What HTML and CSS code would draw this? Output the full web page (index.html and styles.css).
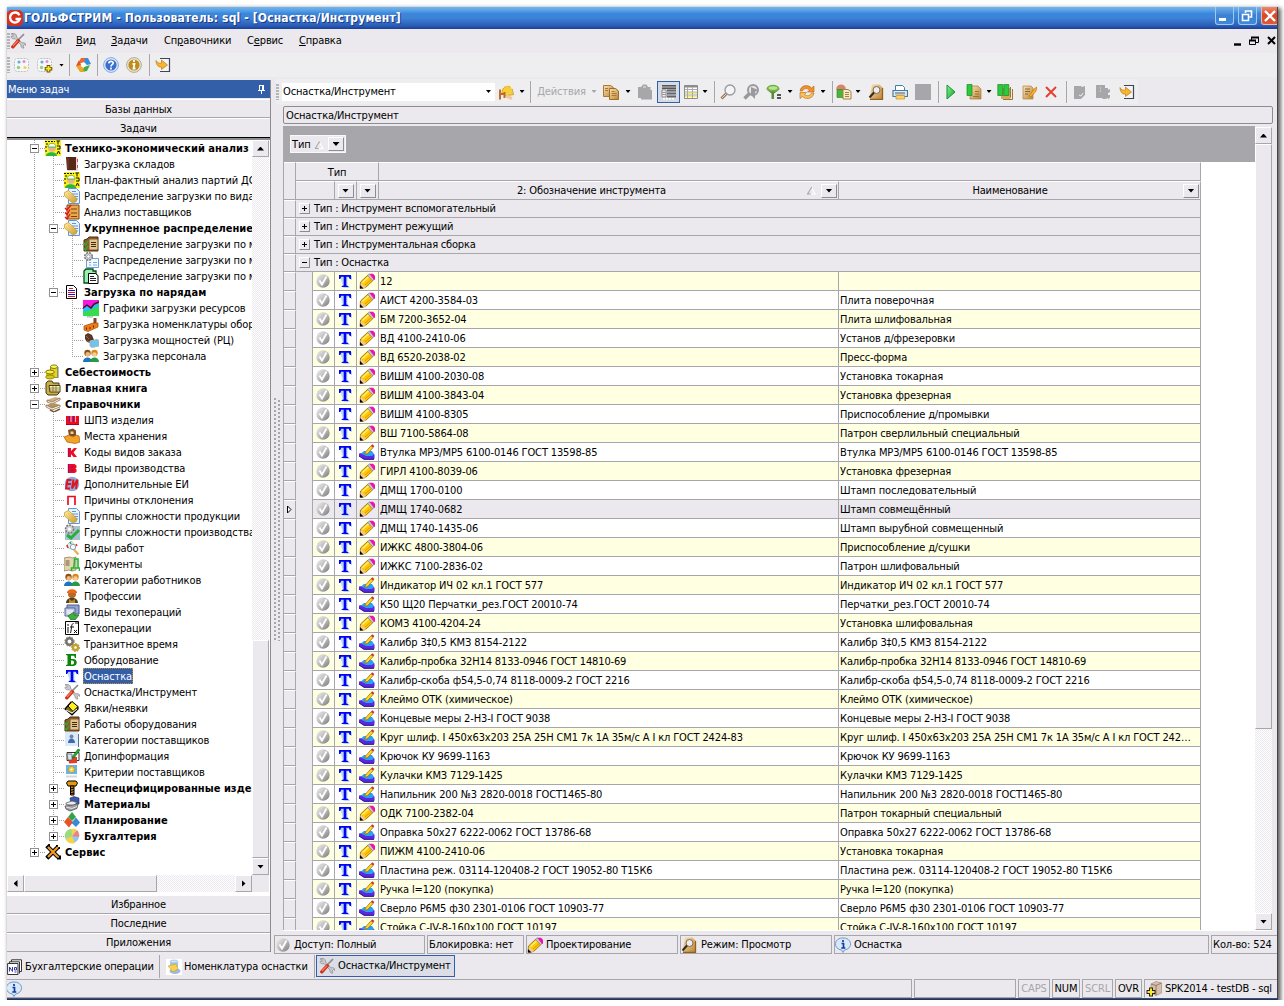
FILE: index.html
```html
<!DOCTYPE html>
<html lang="ru">
<head>
<meta charset="utf-8">
<title>ГОЛЬФСТРИМ</title>
<link rel="stylesheet" href="styles.css">
</head>
<body>
<svg class="sprite" aria-hidden="true">
  <defs>
    <linearGradient id="g-ball" x2="1" y2="1"><stop offset="0" stop-color="#f0f0f0"/><stop offset=".5" stop-color="#bcbcbc"/><stop offset="1" stop-color="#777"/></linearGradient>
    <linearGradient id="g-gold" x2="1" y2="1"><stop offset="0" stop-color="#fdeb9a"/><stop offset="1" stop-color="#cf9a2c"/></linearGradient>
    <linearGradient id="g-tan" x2="1" y2="1"><stop offset="0" stop-color="#fbe3b4"/><stop offset="1" stop-color="#b98433"/></linearGradient>
    <linearGradient id="g-green" x2="1" y2="1"><stop offset="0" stop-color="#8af090"/><stop offset="1" stop-color="#0fa52c"/></linearGradient>
  </defs>
  <symbol id="app" viewBox="0 0 16 16"><path d="M3 0h10l3 3v10l-3 3H3l-3-3V3z" fill="#d8301c"/><path d="M12.500 5.200A5 5 0 1 0 12.800 9H8.500" fill="none" stroke="#fff" stroke-width="2.400"/></symbol>
  <symbol id="ball" viewBox="0 0 16 16"><circle cx="8" cy="8" r="6.700" fill="url(#g-ball)"/><path d="M4.500 7.500l2.500 4 4.500-8" fill="none" stroke="#fff" stroke-width="1.800"/></symbol>
  <symbol id="t" viewBox="0 0 16 16"><path d="M3 3h12v4h-1l-1-2.300h-2.500v8.800h2V15H6.500" fill="#b9d8f4"/><path d="M2 2h12v4h-1.300l-.9-2.300H9.300v8.700l2 .6V14H4.700v-1l2-.6V3.700H4.200L3.300 6H2z" fill="#0404f4"/></symbol>
  <symbol id="pencil" viewBox="0 0 16 16"><path d="M1.500 9L9 2l5 5.500-7.500 7-5.500 1z" fill="#ffc808" stroke="#8a6200" stroke-width=".8"/><path d="M2 9.500l5 5-6 1z" fill="#f0c8a0"/><path d="M1 12l3.500 3.500H1z" fill="#000"/><path d="M8.500 2.500L10.500.8l5 5-2 2z" fill="#c4c4c8" stroke="#77777c" stroke-width=".6"/><path d="M10.500.7h3.500l2 2v3.800l-1 .5z" fill="#f010b0"/><path d="M3.500 9.500L9.500 4" stroke="#fff27a" stroke-width="1.300"/><path d="M6 12l6.500-5.500" stroke="#e09800"/></symbol>
  <symbol id="edit" viewBox="0 0 16 16"><path d="M0 9.500l3-.5h9l3.500 1.500v4L14.500 15.500H5L0 12z" fill="#5a28e0"/><path d="M2 9.500l3-2.500h8l2 3-2 2H7z" fill="#28a0f8"/><path d="M0 12L5 15.300h10" fill="none" stroke="#28128a"/><path d="M6.500 8L12 1.800l2.200 1.700L8.700 9.500l-3.200.7z" fill="#ffd528" stroke="#a06000" stroke-width=".7"/><path d="M12 1.800L13.200.3l2.200 1.700L14.200 3.500z" fill="#c83030"/></symbol>
  <symbol id="tools" viewBox="0 0 16 16"><path d="M1 1l2 .3v2L1.300 3C.5 5 3 6.500 5 5.500l6 6.500c-.3 2 1 3.500 3 3l-1-2 1.500-1.500 1.300 1C16 10 14 9 12 10L6.500 4C7 1 3.500-.5 1 1z" fill="#cacace" stroke="#88888d" stroke-width=".7"/><path d="M8.500 6.500L14 1.200" stroke="#8c8c90" stroke-width="1.600"/><path d="M2.800 13.800L8.300 7.700" stroke="#d03018" stroke-width="3.400" stroke-linecap="round"/><path d="M3 13L8 7.600" stroke="#fa7a60" stroke-width="1.300"/></symbol>
  <symbol id="wave" viewBox="0 0 16 16"><rect x=".5" y="1.500" width="14" height="13" rx="3" fill="#f7f7f7" stroke="#b9c3bd" stroke-dasharray="2 1"/><circle cx="5" cy="5" r="1.600" fill="#6fa8dc"/><circle cx="10" cy="4.500" r="1.500" fill="#e08adf"/><circle cx="4.500" cy="10.500" r="1.700" fill="#8ed28a"/><circle cx="11" cy="10.500" r="1.600" fill="#f0cf60"/></symbol>
  <symbol id="waveadd" viewBox="0 0 16 16"><use href="#wave"/><path d="M11.500 8v7.500M7.700 11.700h7.600" stroke="#6a5200" stroke-width="3.600"/><path d="M11.500 9v5.500M8.700 11.700h5.600" stroke="#ffe928" stroke-width="1.800"/></symbol>
  <symbol id="cycle" viewBox="0 0 16 16"><path d="M3 7L6 1h5L9 5z" fill="#f0662c"/><path d="M10 1h3l3 6-4 1-3-3z" fill="#3b8fd8"/><path d="M15 8l-3 6-5 1 2-5z" fill="#3fae45"/><path d="M9 15H5L1 9l4-2 3 4z" fill="#f0a524"/><path d="M1 9l3-6 2 5z" fill="#e2502c"/><circle cx="8.300" cy="8" r="2.300" fill="#fff"/></symbol>
  <symbol id="help" viewBox="0 0 16 16"><circle cx="8" cy="8" r="7.400" fill="#dce9fa" stroke="#86a8e0"/><circle cx="8" cy="8" r="5.600" fill="#3a6fd0"/><path d="M5.800 6.400C6 3.500 10.400 3.800 10.200 6.200 10 7.800 8 7.600 8 9.500M8 10.500v2" fill="none" stroke="#fff" stroke-width="1.700"/></symbol>
  <symbol id="about" viewBox="0 0 16 16"><circle cx="8" cy="8" r="7.400" fill="#e8e4d6" stroke="#b4ac90"/><circle cx="8" cy="8" r="5.600" fill="#bd8d1c"/><path d="M8 3v2M6.500 7H8.500l-1 4.500h2" fill="none" stroke="#fff" stroke-width="1.800"/></symbol>
  <symbol id="exit" viewBox="0 0 16 16"><path d="M5 1.500h9.500v13H5" fill="#f5f5f8" stroke="#3c4658" stroke-width="1.200"/><path d="M1 3.500c1 2.500 3 3 5.500 2.500V3l6 5-6 4.500V10C3 10.500 1 7.500 1 3.500z" fill="#f7b52e" stroke="#b97b14" stroke-width=".7"/></symbol>
  <symbol id="helmet" viewBox="0 0 16 16"><path d="M4 9c0-9 11-9 11 0l1 1.500L7 12z" fill="#f6ce3c" stroke="#c09018" stroke-width=".7"/><path d="M8 2l4-1 2 4" fill="none" stroke="#ffef95"/><path d="M2 5.500v10M6.500 8v6M2 10h5" stroke="#c06c28" stroke-width="2"/><path d="M8 12l6 2.500" stroke="#f0c9a0" stroke-width="3"/></symbol>
  <symbol id="copy" viewBox="0 0 16 16"><path d="M.5 1.500h7l3 2v9H.5z" fill="url(#g-tan)" stroke="#b1762a"/><path d="M6.500 4.500h6l3 2.500v8.500h-9z" fill="url(#g-tan)" stroke="#a46a20"/><path d="M8.500 7.500h3M8.500 9.500h5M8.500 11.500h5M2 4.500h3M2 6.500h3" stroke="#a5793b"/></symbol>
  <symbol id="paste" viewBox="0 0 16 16"><path d="M1 3h3l2-2.500h3.500L11 3h2.500v3H15v9.500H4V14H1z" fill="#a7a6aa"/><path d="M6 3h3" stroke="#e6e6ea"/></symbol>
  <symbol id="grpview" viewBox="0 0 16 16"><path d="M1 1h14v4H1z" fill="#55555a"/><path d="M1 3h14" stroke="#c8c8cc"/><path d="M1 6h4v7H1z" fill="#f4f4f6" stroke="#77777c" stroke-width=".8"/><path d="M1.500 8.500h3M1.500 10.500h3" stroke="#77777c" stroke-width=".8"/><path d="M6 6.500h9M6 9.500h9M6 12.500h9" stroke="#66666b" stroke-width="2"/><path d="M2 14.800h12" stroke="#fff" stroke-width="1.600" stroke-dasharray="2 1"/></symbol>
  <symbol id="table" viewBox="0 0 16 16"><path d="M1.500 1.500h13v13h-13z" fill="#fff" stroke="#8c8c91"/><path d="M1.500 2.500h13" stroke="#8c8c91" stroke-width="2"/><path d="M2 9.500h12M2 12.500h12" stroke="#f4ed59" stroke-width="1.500"/><path d="M4.500 3v11M9.500 3v11M2 5.500h12M2 8h12M2 11h12" stroke="#aaa"/></symbol>
  <symbol id="find" viewBox="0 0 16 16"><path d="M6.500 9.500L1.500 14.500" stroke="#9b7557" stroke-width="3"/><path d="M6 10l-4 4" stroke="#f4d8bd"/><circle cx="10" cy="6" r="5" fill="#f3f3f8" stroke="#98989d" stroke-width="1.300"/></symbol>
  <symbol id="findnext" viewBox="0 0 16 16"><path d="M6.500 9.500L1.500 14.500" stroke="#99989d" stroke-width="3.500"/><circle cx="10" cy="6" r="5" fill="#e7e6ea" stroke="#9a999e" stroke-width="2"/><path d="M8 3l7 3-3 2v7L8 11z" fill="#9a999e"/></symbol>
  <symbol id="filter" viewBox="0 0 16 16"><ellipse cx="7" cy="4.500" rx="6.500" ry="3.700" fill="#73b146"/><ellipse cx="7" cy="4" rx="4.500" ry="1.800" fill="#bce394"/><path d="M1 6l4.500 3.500V15H8V9.500L13 6c-3 2-9 2-12 0z" fill="#5a8c37"/><path d="M11 11h4M11 14h4" stroke="#222" stroke-width="1.700"/></symbol>
  <symbol id="refresh" viewBox="0 0 16 16"><path d="M1 7C2 1 9 0 12.500 4L15 2v6H8.500l2-2C8 4 5 4 3.500 7z" fill="#f1902a" stroke="#b76415" stroke-width=".6"/><path d="M15 9c-1 6-8 7-11.500 3.500L1 14.500V8.500h6.500l-2 2C8 12.500 11 12 12.500 9z" fill="#f9c05a" stroke="#b76415" stroke-width=".6"/></symbol>
  <symbol id="report" viewBox="0 0 16 16"><ellipse cx="5" cy="4.500" rx="4.700" ry="4" fill="#d8846a"/><path d="M1 5.500h7v8H1z" fill="#48b538" stroke="#2d7d22" stroke-width=".6"/><path d="M7 5.500h5l3 2v7.500H7z" fill="#fbecc9" stroke="#a67f43"/><path d="M9 8.500h4M9 10.500h4M9 12.500h4" stroke="#a67f43"/></symbol>
  <symbol id="preview" viewBox="0 0 16 16"><path d="M4 .5h7.500l3 3v12H2v-4z" fill="url(#g-tan)"/><path d="M14.500 4v11.500H2" fill="none" stroke="#94601c" stroke-width="1.300"/><circle cx="8.500" cy="6" r="3.500" fill="#e8ecf3" stroke="#866a44"/><path d="M6 8.500L1.500 13.500" stroke="#332b22" stroke-width="2"/></symbol>
  <symbol id="print" viewBox="0 0 16 16"><path d="M3.500 7V1.500h7l2 2V7" fill="#fff" stroke="#3e7daa"/><path d="M1 6.500h14.500v6H1z" fill="#e6e9ed" stroke="#3e7daa" stroke-width="1.200"/><path d="M3 8h10v2.500H3z" fill="#98a2ab"/><path d="M4 11.500h8.500V15H4z" fill="#ffcf61" stroke="#c68d25" stroke-width=".7"/></symbol>
  <symbol id="stop" viewBox="0 0 16 16"><path d="M0 0h16v16H0z" fill="#a7a6aa"/></symbol>
  <symbol id="play" viewBox="0 0 16 16"><path d="M4 1l8 7-8 7z" fill="url(#g-green)" stroke="#109431"/></symbol>
  <symbol id="doc1" viewBox="0 0 16 16"><path d="M4 2h8l3 3v10H4z" fill="url(#g-tan)" stroke="#a67d3e" stroke-width=".7"/><path d="M7 12.500h6M9 7.500h4M9 10h4" stroke="#967444"/><path d="M1 .5h5v11H1z" fill="#2cc93c" stroke="#168a24" stroke-width=".7"/></symbol>
  <symbol id="doc2" viewBox="0 0 16 16"><path d="M4 4h9.500v11H4z" fill="#d5a85c"/><path d="M15.500 5v10.500H6" fill="none" stroke="#9d7430"/><path d="M13.500 3v10.500" stroke="#9d7430"/><path d="M.8.500h5v11h-5zM6.800.500h5v11h-5z" fill="#2cc93c" stroke="#168a24" stroke-width=".7"/></symbol>
  <symbol id="docedit" viewBox="0 0 16 16"><path d="M2 2h8l2 2v11H2z" fill="url(#g-tan)" stroke="#b0833e" stroke-width=".7"/><path d="M4 5h5M4 7.500h5M4 10h3" stroke="#80633b"/><path d="M8 12l5-7 3-2-1 4-5 6z" fill="#f9ae2d" stroke="#b36c14" stroke-width=".6"/></symbol>
  <symbol id="del" viewBox="0 0 16 16"><path d="M3 3l10 10M13 3L3 13" stroke="#e83c30" stroke-width="1.900"/></symbol>
  <symbol id="gr1" viewBox="0 0 16 16"><path d="M2 2h7l1 1 3-1v9l-4 4H2z" fill="#a7a6aa"/><path d="M7 11l2 1 2-3" fill="none" stroke="#f0f0f2"/></symbol>
  <symbol id="gr2" viewBox="0 0 16 16"><path d="M1 1h9v3h3v2l2-1v3l-2 1v2h2v2l-1 2-2-1-1 1H8l-1-1H1z" fill="#a7a6aa"/><path d="M5 4h1M5 7h1" stroke="#eee"/></symbol>
  <symbol id="info" viewBox="0 0 16 16"><path d="M8 1a6.800 6 0 0 1 1.500 12L8 15.500 6.500 13A6.800 6 0 0 1 8 1z" fill="#d9e9f9" stroke="#6d9ccc"/><path d="M8 3v2M6.500 6.500H8.500V11M6.300 11h4" fill="none" stroke="#143a9c" stroke-width="1.700"/></symbol>
  <symbol id="numdoc" viewBox="0 0 16 16"><path d="M4.500 3V.8H14.500V12.500h-2M2.500 5V2.800H12.500V14.500" fill="#fff" stroke="#333"/><path d="M.6 4.500h10.400v11H.6z" fill="#fff" stroke="#333"/><path d="M2.500 12.500V8l3 4.500V8M9.500 8.500H7.500v2.500h2zM7.500 13h2" fill="none" stroke="#3838a8"/></symbol>
  <symbol id="nomen" viewBox="0 0 16 16"><path d="M0 0h16v16H0z" fill="#fff"/><path d="M4 2.500h8v6H4z" fill="#9fc6ea"/><ellipse cx="8" cy="2.500" rx="4" ry="1.500" fill="#d3e6f7" stroke="#7da3c9" stroke-width=".5"/><ellipse cx="9" cy="12" rx="5.500" ry="3" fill="#9fb9dc"/><path d="M2 7l8-2 2 5-5 3z" fill="#fad04d" stroke="#c89a23" stroke-width=".5"/></symbol>
  <symbol id="db" viewBox="0 0 16 16"><path d="M5 3l5-2.500L15.500 2v10L10 14.500 5 12z" fill="#d7bfae" stroke="#9b8376" stroke-width=".6"/><path d="M10 4.500v10M5 3l5 1.500L15.500 2" fill="none" stroke="#95796a"/><path d="M5 6.500v9M.5 11h9" stroke="#222" stroke-width="4"/><path d="M5 7.500v7M1.500 11h7" stroke="#ffea22" stroke-width="2"/></symbol>

  <symbol id="tea" viewBox="0 0 16 16"><path d="M0 0h16v16H0z" fill="#fff01a"/><path d="M0 1.500h10M1 4h3M0 7h2M0 11h3" stroke="#111" stroke-dasharray="2 1"/><path d="M11.500 1h3.500M13 1v3.500M12 6h3v3h-3M12 14l1.500-3 1.500 3" fill="none" stroke="#111"/><circle cx="7" cy="8" r="3.800" fill="#e5b48b"/><path d="M3 7c0-5 8-5 8 0z" fill="#f3fff3" stroke="#29a339" stroke-width=".7"/><path d="M1 16c0-5 11-5 11 0z" fill="#27b83d"/></symbol>
  <symbol id="book" viewBox="0 0 16 16"><path d="M3 1h9l2 1v13H4l-1-1z" fill="#e6d7cd"/><path d="M2 1h10v13H3z" fill="#572616"/><path d="M4 2v11" stroke="#7e4631"/><path d="M13.500 3v3M13.500 9v3" stroke="#e33c6b"/></symbol>
  <symbol id="gold" viewBox="0 0 16 16"><path d="M4.500.5h8l3 3v12h-11z" fill="#e9f2fd" stroke="#5e93d6"/><path d="M8 3.500h4M8 6h6M10 8.500h4M11 11h3" stroke="#5e93d6"/><path d="M.5 4.500l4-2 8 7.500v3.500l-4 1.500L.5 8z" fill="url(#g-gold)" stroke="#c79733" stroke-width=".7"/></symbol>
  <symbol id="check" viewBox="0 0 16 16"><path d="M3 1h12v14H3z" fill="#eba94d" stroke="#7b4513"/><path d="M7 5h6M7 9h6M7 12.500h6" stroke="#774015"/><path d="M1 4l2 2 4-5M1 8.500l2 2 3-5M1 13l2 2 3-5" fill="none" stroke="#dd1717" stroke-width="1.400"/></symbol>
  <symbol id="folderlist" viewBox="0 0 16 16"><path d="M1 4l3-1 2-2h9v14H1z" fill="#8a5c2c" stroke="#4b3013"/><path d="M6.500 3.500h8v10h-8z" fill="#e3c48f"/><path d="M8 6.500h5M8 8.500h5M8 10.500h5" stroke="#3d2811"/><path d="M1 7l1.500 2L5 5M1 12l1.500 2L5 10" fill="none" stroke="#2dad2d" stroke-width="1.300"/></symbol>
  <symbol id="gearlist" viewBox="0 0 16 16"><path d="M3.500 6.500h12v9h-12z" fill="#f5f9ff" stroke="#6ea0dd"/><path d="M6 10.500h2M10 10.500h4M6 13h2M10 13h4" stroke="#78a8e0"/><circle cx="5.500" cy="4.500" r="3.800" fill="#d0d0d0" stroke="#777" stroke-width="1.400" stroke-dasharray="2 1"/><circle cx="5.500" cy="4.500" r="1.600" fill="#fff" stroke="#888" stroke-width=".6"/></symbol>
  <symbol id="greendoc" viewBox="0 0 16 16"><path d="M1 15V3l2-2h7v2h3v12z" fill="#9bf0b0" stroke="#064a1a" stroke-width="1.300"/><path d="M5.500 5.500h7l2.500 2V15.500H5.500z" fill="#fff" stroke="#000"/><path d="M7 8.500h4M7 10.500h6M7 12.500h6" stroke="#222"/></symbol>
  <symbol id="order" viewBox="0 0 16 16"><path d="M2.500 1.500h7l3 3v10h-10z" fill="#fff" stroke="#000"/><path d="M5 4.500h4M4 8.500h7M4 12.500h7" stroke="#e21a1a"/><path d="M4 6.500h7M4 10.500h7" stroke="#1515dd"/></symbol>
  <symbol id="graph" viewBox="0 0 16 16"><path d="M0 0h16v16H0z" fill="#f815e0"/><path d="M0 9l4-3 4 3 3-4 5-2v13H0z" fill="#25bff0"/><path d="M0 12l5-1 4-2 7-3v10H0z" fill="#35dc4d"/><path d="M0 8l4-3 4 3 3-4 5-2" fill="none" stroke="#341a1a" stroke-width="1.400"/></symbol>
  <symbol id="factory" viewBox="0 0 16 16"><path d="M4 1c2-1 4 1 6-.5" fill="none" stroke="#999"/><path d="M10.500 2h3v8h-3z" fill="#704a32"/><path d="M1 10l9-3h5v4L5 15.500 1 14z" fill="#f17a13" stroke="#9b4b05" stroke-width=".7"/><path d="M3 12.500h1M6.500 12h1M10 10.500h1" stroke="#5b2700" stroke-width="2"/></symbol>
  <symbol id="monitor" viewBox="0 0 16 16"><path d="M2 3l3-2 4 2 2 5-3 3-4-1-2-3z" fill="#5b3624"/><path d="M3 4l3 3M4 9l4 2" stroke="#9a6a4c"/><path d="M7 9l7-1.500 2 1v5.500l-7 1.500-2-1.500z" fill="#6ec4ea" stroke="#a9b6bd"/></symbol>
  <symbol id="people" viewBox="0 0 16 16"><circle cx="4.500" cy="5" r="3.200" fill="#8f5018"/><circle cx="4.800" cy="6.300" r="2.300" fill="#f1b575"/><path d="M0 14c0-6 9-6 9 0z" fill="#1d74bf"/><circle cx="11.500" cy="5" r="3.200" fill="#d58a19"/><circle cx="11.500" cy="6.500" r="2.200" fill="#f7cf96"/><path d="M7 14c0-6 9-6 9 0z" fill="#279748"/></symbol>
  <symbol id="coins" viewBox="0 0 16 16"><path d="M5.500 2.500h7v11h-7z" fill="#e8d614" stroke="#6a6010" stroke-width=".7"/><ellipse cx="9" cy="2.700" rx="3.500" ry="1.800" fill="#fdf85f" stroke="#867b0d"/><path d="M1 8h8.500v5.500H1z" fill="#d9c612"/><ellipse cx="5" cy="8" rx="4.300" ry="2" fill="#fbf04a" stroke="#7c7209"/><ellipse cx="5" cy="13" rx="4.300" ry="2" fill="#d9c612" stroke="#7c7209" stroke-width=".7"/><path d="M12.800 3v11" stroke="#8a8a8a" stroke-width="1.600"/></symbol>
  <symbol id="ledger" viewBox="0 0 16 16"><path d="M1 13V3l2-2h4l1 2h6v10l-2 2H3z" fill="#c9ae45" stroke="#453b0d"/><path d="M4 5.500h11V12H5z" fill="#fff6c5" stroke="#453b0d"/><path d="M5 8h9M5 10h9M8 6v6M11 6v6" stroke="#6f621e" stroke-width=".7"/></symbol>
  <symbol id="books" viewBox="0 0 16 16"><path d="M2 4l8-3 5 1-8 4z" fill="#d0b086"/><path d="M2 4v2l5 2 8-4V2L7 6z" fill="#f5eee2" stroke="#775a38" stroke-width=".7"/><path d="M1 9l8-2 6 2-8 3z" fill="#b8925e"/><path d="M1 9v2l6 3 8-3V9l-8 3z" fill="#fbf6ec" stroke="#775a38" stroke-width=".7"/><path d="M5 14l4 2 6-3" fill="none" stroke="#775a38" stroke-width="1.400"/></symbol>
  <symbol id="bars" viewBox="0 0 16 16"><path d="M2 4h13v9H2z" fill="#f00a20"/><path d="M5.500 4v6M9.500 4v6" stroke="#5c1db0"/><path d="M7 4v6M11.500 4v6" stroke="#fbb"/><path d="M2 12.500h13" stroke="#a8002c"/></symbol>
  <symbol id="store" viewBox="0 0 16 16"><path d="M4 2l5-1.500 3 2V9L5 8z" fill="#7e4d20"/><path d="M6.500 3.500h3V6h-3z" fill="#e9d1a5"/><path d="M0 9l5-2 4 2 3-2 3 1 1 6-5 1.500L3 14z" fill="#f4a125" stroke="#a65d0a" stroke-width=".7"/></symbol>
  <symbol id="k" viewBox="0 0 16 16"><path d="M4 4h3v3l3-3h3L9.500 8.500 13 13H9.500L7 10v3H4z" fill="#f00a20"/><path d="M4.300 4v9" stroke="#6414a0" stroke-width=".8"/></symbol>
  <symbol id="v" viewBox="0 0 16 16"><path d="M4 4h6.500l2 1.500v2l-1 1 1 1V12l-2 1H4z" fill="#f00a20"/><path d="M7 7h2.500M7 10.500h2.500M4.300 4v9" stroke="#6414a0" stroke-width=".9"/></symbol>
  <symbol id="ei" viewBox="0 0 16 16"><circle cx="8" cy="8" r="7.300" fill="#86afe0"/><path d="M7.500 4H3.500L2 12.500h4M3 8h4M9.500 3.500L8 12.500l5.500-9L12 13" fill="none" stroke="#e31420" stroke-width="2"/></symbol>
  <symbol id="p" viewBox="0 0 16 16"><path d="M4 13V4.500h7V13" fill="none" stroke="#f00a20" stroke-width="1.700"/></symbol>
  <symbol id="geargreen" viewBox="0 0 16 16"><path d="M6 2h10v14H1V8z" fill="#a8c2cf"/><circle cx="5.500" cy="5" r="4" fill="#d0d0d0" stroke="#777" stroke-width="1.500" stroke-dasharray="2 1"/><circle cx="5.500" cy="5" r="1.500" fill="#fff"/><path d="M3 11l4 3 8-8" fill="none" stroke="#2bae38" stroke-width="3"/></symbol>
  <symbol id="works" viewBox="0 0 16 16"><path d="M2 6l5-5 3 3-4 5z" fill="#e4edf3" stroke="#a1b4c0" stroke-width=".7"/><path d="M10 9.500l4.500 5" stroke="#e9b04e" stroke-width="2.200"/><circle cx="9" cy="7" r="2.700" fill="#f5f7fb" stroke="#8ba0b3"/><path d="M3 5l1 3M12 4l1 2" stroke="#da3322" stroke-width="1.500"/><path d="M6 2l1 2" stroke="#39a93d" stroke-width="1.500"/></symbol>
  <symbol id="docs" viewBox="0 0 16 16"><path d="M0 2l6-1 2 1 4-1v13l-4 1-3-1-5 1z" fill="#e5d5b1" stroke="#877249" stroke-width=".7"/><path d="M1.500 5h4M1.500 7h4M1.500 9h4" stroke="#735e3c"/><path d="M9.500 12c1-3 1-6 1-9H14v9M7.500 15v-3h8v3" fill="none" stroke="#22b833" stroke-width="1.600"/></symbol>
  <symbol id="worker" viewBox="0 0 16 16"><circle cx="8" cy="6" r="4" fill="#b6692c"/><path d="M3 5c0-5 10-5 10 0z" fill="#ef6918"/><path d="M2 15c0-7 12-7 12 0z" fill="#51401f"/><path d="M5 11l3 2 3-2v4H5z" fill="#c28b22"/></symbol>
  <symbol id="techkinds" viewBox="0 0 16 16"><path d="M3 1h12v9H3z" fill="#92a4d5" stroke="#4c5b92"/><path d="M1 4h10v8H1z" fill="#c5cee9" stroke="#5c6794"/><path d="M3 7h6M3 9h6" stroke="#fff"/><path d="M4 12l6-4v3h5l-4 5H7z" fill="#3fb040" stroke="#18701b" stroke-width=".7"/></symbol>
  <symbol id="tech" viewBox="0 0 16 16"><path d="M1.500 1.500h13v13h-13z" fill="#fff" stroke="#000"/><path d="M4 4v2M4 7v6M9.500 3.500C7 3.500 8 8 6.500 13M6 7h4M11 3h3M10 10l3 3M13 10l-3 3" fill="none" stroke="#111"/></symbol>
  <symbol id="gears" viewBox="0 0 16 16"><circle cx="5.500" cy="5.500" r="3.200" fill="none" stroke="#77736b" stroke-width="2.500"/><circle cx="5.500" cy="5.500" r="4.700" fill="none" stroke="#77736b" stroke-dasharray="1.500 1.500"/><circle cx="11.500" cy="11.500" r="2.500" fill="#fff" stroke="#c4a42c" stroke-width="2.400"/><circle cx="11.500" cy="11.500" r="4" fill="none" stroke="#a8892c" stroke-dasharray="1.500 1.500"/></symbol>
  <symbol id="b" viewBox="0 0 16 16"><path d="M2 2h10v4h-1l-1-2.300H7V7h2c5 0 5 7 0 7H2v-1l1.500-.6V3.600L2 3zM7 8.500v4h1.500c2 0 2-4 0-4z" fill="#0c850c" fill-rule="evenodd"/></symbol>
  <symbol id="yavki" viewBox="0 0 16 16"><path d="M1 9l6-7 7 5v2l-6 6z" fill="#817411" stroke="#000" stroke-width="1.200"/><path d="M4 6l4-4.500 6 5-5 5z" fill="#ffef22" stroke="#000"/><path d="M2 10l6 3 5-4" fill="none" stroke="#fff"/></symbol>
  <symbol id="supplier" viewBox="0 0 16 16"><path d="M1 0h13v14H1z" fill="#dce9f8"/><circle cx="7.500" cy="4.500" r="2" fill="#6889b9"/><path d="M4 11c0-6 7-6 7 0z" fill="#4269a7"/><path d="M14.500 2v13" stroke="#587196"/></symbol>
  <symbol id="addinfo" viewBox="0 0 16 16"><path d="M3 4.500h12v8H3z" fill="#fff" stroke="#333"/><path d="M4 9h9v6l-8 .5z" fill="#e33e27"/><path d="M3 6h5v6H4z" fill="#d3e4ef" stroke="#555" stroke-width=".7"/><path d="M8 9l6-8 2 1-6 8z" fill="#24ad33" stroke="#0b6516" stroke-width=".6"/></symbol>
  <symbol id="criteria" viewBox="0 0 16 16"><path d="M2 1h11v9H2z" fill="#6bb2ea"/><circle cx="7.500" cy="5.500" r="3" fill="#f3cf2a" stroke="#c69815" stroke-dasharray="2 1"/><circle cx="7.500" cy="5.500" r="1.100" fill="#fff"/><path d="M2 12.500h11" stroke="#cfd8e2" stroke-width="2"/></symbol>
  <symbol id="bolt" viewBox="0 0 16 16"><path d="M4 1h8l1.500 2-1.500 3H4L2.500 3z" fill="#e8980e" stroke="#000"/><path d="M6.500 6h3.500v9H6.500z" fill="#d7860c" stroke="#000"/><path d="M6 9l4-1M6 11.500l4-1M6 14l4-1" stroke="#000"/></symbol>
  <symbol id="materials" viewBox="0 0 16 16"><path d="M6 2l4-1.500 5 1.500v6l-8 1z" fill="#3b58ad" stroke="#1c2c68" stroke-width=".6"/><path d="M2 7l6-2 5 1.500-3 3-8-1z" fill="#ececef" stroke="#515158" stroke-width=".7"/><path d="M1 10l8-1 5-1.500-1 5-7 2.500-4-2z" fill="#9c9ca2" stroke="#515158" stroke-width=".8"/><path d="M2 11l6 1.500 5-2" fill="none" stroke="#e4e4e8"/></symbol>
  <symbol id="plan" viewBox="0 0 16 16"><path d="M4 5l4-5 4 5-4 4z" fill="#33a249"/><path d="M0 10l4-5 5 5-4 5.500z" fill="#e75228"/><path d="M7.500 11L12 5.500l4 5-4 4.500z" fill="#3d87d4"/></symbol>
  <symbol id="pie" viewBox="0 0 16 16"><circle cx="8" cy="8" r="7" fill="#92c6ec"/><path d="M8 8l3 7a7 7 0 0 1-9.500-4.500z" fill="#f1d34c"/><path d="M8 8L13 2a7 7 0 0 1 2 7z" fill="#eb8387"/><path d="M8 8L7 1a7 7 0 0 1 6 1z" fill="#f1d34c"/><path d="M8 8L1 10a7 7 0 0 1 6-9z" fill="#99dd79"/></symbol>
  <symbol id="service" viewBox="0 0 16 16"><path d="M3 13L13 3" stroke="#000" stroke-width="4.500"/><path d="M3 3l10 10" stroke="#000" stroke-width="4"/><path d="M1 4l3-3v3l2 1M12 1v3h3M1 12l3 3M12 14.500h3v-3" fill="none" stroke="#000" stroke-width="2"/><path d="M3 13L13 3M3 3l10 10" stroke="#f49b20" stroke-width="2.200"/></symbol>
</svg>

<div class="window">
  <header class="titlebar">
    <svg class="i"><use href="#app"/></svg>
    <h1>ГОЛЬФСТРИМ - Пользователь: sql - [Оснастка/Инструмент]</h1>
    <div class="winbtns">
      <span class="wb"><svg viewBox="0 0 19 18"><path d="M4 12.500h7" stroke="#fff" stroke-width="3"/></svg></span>
      <span class="wb"><svg viewBox="0 0 19 18"><path d="M7.500 6V4h6v6h-2M4.500 7.500h6v6h-6z" fill="none" stroke="#fff" stroke-width="1.600"/></svg></span>
      <span class="wb close"><svg viewBox="0 0 19 18"><path d="M4 4l10 10M14 4L4 14" stroke="#fff" stroke-width="2.300"/></svg></span>
    </div>
  </header>

  <nav class="menubar">
    <i class="grip"></i>
    <svg class="i"><use href="#tools"/></svg>
    <span><u>Ф</u>айл</span><span><u>В</u>ид</span><span><u>З</u>адачи</span><span>Сп<u>р</u>авочники</span><span>С<u>е</u>рвис</span><span><u>С</u>правка</span>
    <svg class="mdi" viewBox="0 0 44 12"><path d="M1 9.500h7" stroke="#000" stroke-width="2.400"/><path d="M18.500 5V2.500h7v5H23" fill="none" stroke="#000"/><path d="M18 2.500h8" stroke="#000" stroke-width="2"/><path d="M16.500 5.500h6v4h-6z" fill="none" stroke="#000"/><path d="M16 5.500h7" stroke="#000" stroke-width="2"/><path d="M35 2l7 7M42 2l-7 7" stroke="#000" stroke-width="2"/></svg>
  </nav>

  <div class="toolbar top">
    <i class="grip"></i>
    <svg class="i"><use href="#wave"/></svg><svg class="i"><use href="#waveadd"/></svg><i class="dd"></i><i class="sep"></i>
    <svg class="i"><use href="#cycle"/></svg><i class="sep"></i>
    <svg class="i"><use href="#help"/></svg><svg class="i"><use href="#about"/></svg><i class="sep"></i>
    <svg class="i"><use href="#exit"/></svg>
  </div>

  <div class="body">
    <aside class="side">
      <div class="side-head"><span>Меню задач</span><svg viewBox="0 0 9 9"><path d="M2.500 .5h4M2.500 0v5.500M5.500 0v5.500M6.500 0v5.500M1 5.500h7M4.500 6v3" stroke="#fff"/></svg></div>
      <div class="side-btn">Базы данных</div>
      <div class="side-btn open">Задачи</div>
      <div class="treebox">
        <div class="tree" id="tree"></div>
        <div class="vscroll"><b class="up"></b><i class="track"></i><i class="thumb"></i><b class="down"></b></div>
        <div class="hscroll"><b class="left"></b><i class="thumb"></i><i class="track"></i><b class="right"></b></div>
      </div>
      <div class="side-btn">Избранное</div>
      <div class="side-btn">Последние</div>
      <div class="side-btn">Приложения</div>
    </aside>
    <div class="splitter"><i></i></div>

    <main class="main">
      <div class="toolbar mainbar">
        <i class="grip"></i>
        <div class="combo"><span>Оснастка/Инструмент</span><i class="dd"></i></div>
        <svg class="i"><use href="#helmet"/></svg><i class="dd"></i><i class="sep"></i>
        <span class="off"><u>Д</u>ействия</span><i class="dd dim"></i>
        <svg class="i"><use href="#copy"/></svg><i class="dd"></i>
        <svg class="i"><use href="#paste"/></svg>
        <span class="pressed"><svg class="i"><use href="#grpview"/></svg></span>
        <svg class="i"><use href="#table"/></svg><i class="dd"></i><i class="sep"></i>
        <svg class="i"><use href="#find"/></svg><svg class="i"><use href="#findnext"/></svg>
        <svg class="i"><use href="#filter"/></svg><i class="dd"></i>
        <svg class="i"><use href="#refresh"/></svg><i class="dd"></i><i class="sep"></i>
        <svg class="i"><use href="#report"/></svg><i class="dd"></i>
        <svg class="i"><use href="#preview"/></svg><svg class="i"><use href="#print"/></svg><svg class="i"><use href="#stop"/></svg><i class="sep"></i>
        <svg class="i"><use href="#play"/></svg><svg class="i"><use href="#doc1"/></svg><i class="dd"></i>
        <svg class="i"><use href="#doc2"/></svg><svg class="i"><use href="#docedit"/></svg><svg class="i"><use href="#del"/></svg><i class="sep"></i>
        <svg class="i"><use href="#gr1"/></svg><svg class="i"><use href="#gr2"/></svg><svg class="i"><use href="#exit"/></svg>
      </div>
      <div class="caption">Оснастка/Инструмент</div>
      <div class="gridbox">
        <div class="grid">
          <div class="groupband"><div class="chip"><span>Тип</span><i class="asc"></i><i class="fbtn"></i></div></div>
          <div class="table">
            <div class="thead">
              <div class="ind"></div>
              <div class="band">Тип</div><div class="band wide"></div>
              <div class="th"></div><div class="th"><i class="fbtn"></i></div><div class="th"><i class="fbtn"></i></div>
              <div class="th c2"><span>2: Обозначение инструмента</span><i class="asc"></i><i class="fbtn"></i></div>
              <div class="th c3"><span>Наименование</span><i class="fbtn"></i></div>
            </div>
            <div id="rows"></div>
          </div>
        </div>
        <div class="vscroll"><b class="up"></b><i class="thumb"></i><i class="track"></i><b class="down"></b></div>
      </div>
      <div class="status">
        <div><svg class="i"><use href="#ball"/></svg>Доступ: Полный</div>
        <div>Блокировка: нет</div>
        <div><svg class="i"><use href="#pencil"/></svg>Проектирование</div>
        <div><svg class="i"><use href="#preview"/></svg>Режим: Просмотр</div>
        <div><svg class="i"><use href="#info"/></svg>Оснастка</div>
        <div>Кол-во: 524</div>
      </div>
    </main>
  </div>

  <div class="tabs">
    <div><svg class="i"><use href="#numdoc"/></svg>Бухгалтерские операции</div>
    <div><svg class="i"><use href="#nomen"/></svg>Номенклатура оснастки</div>
    <div class="active"><svg class="i"><use href="#tools"/></svg>Оснастка/Инструмент</div>
  </div>
  <footer class="appstatus">
    <div><svg class="i"><use href="#info"/></svg></div>
    <div></div>
    <div class="off">CAPS</div><div>NUM</div><div class="off">SCRL</div><div>OVR</div>
    <div><svg class="i"><use href="#db"/></svg>SPK2014 - testDB - sql</div>
  </footer>
</div>
<script src="app.js"></script>
</body>
</html>
```
FILE: styles.css
```css
* { box-sizing: border-box; }
body { margin: 0; background: #fff; }
.sprite { position: absolute; width: 0; height: 0; }
.window {
  width: 1271px; height: 993px; margin: 7px 0 0 7px;
  display: flex; flex-direction: column; overflow: hidden;
  background: #ebe9ed; color: #000;
  font: 11px/16px "DejaVu Sans Condensed", "DejaVu Sans", sans-serif;
  font-stretch: condensed; letter-spacing: -0.14px; white-space: nowrap;
  border-right: 1px solid #444; border-bottom: 1px solid #333;
  box-shadow: 2px 2px 4px 1px rgba(0,0,0,.6);
}
.i { width: 16px; height: 16px; flex: none; display: block; }
i, b { font-style: normal; flex: none; }
u { text-underline-offset: 1px; }
.off { color: #a7a6aa; }

.titlebar {
  height: 22px; flex: none; display: flex; align-items: center;
  background: linear-gradient(#74b6ec 0, #5aa2e6 15%, #3b86dc 30%, #3d83d6 50%, #2b5cb8 85%, #1b3f94 100%);
}
.titlebar h1 {
  margin: 0 0 0 1px; color: #fff; font-size: 12px; line-height: 18px; font-weight: bold; flex: 1;
  letter-spacing: 0.14px; text-shadow: 1px 1px 0 #1a3a80;
}
.winbtns { display: flex; gap: 4px; width: 62px; height: 22px; overflow: hidden; }
.wb { width: 19px; height: 18px; flex: none; background: linear-gradient(#6fb0ea, #3d80d2 50%, #3e8ad8); border: 1px solid #9dcbf0; border-top: 0; border-radius: 0 0 3px 3px; }
.wb svg { width: 19px; height: 18px; display: block; margin-left: -1px; }
.wb.close { background: linear-gradient(#ec8a6c, #d8482a 50%, #e05a38); border-color: #f3b6a2; }

.menubar { height: 24px; flex: none; display: grid; grid-template-columns: 3px 25px 41px 35px 53px 83px 52px 50px 1fr; align-items: center; }
.menubar .mdi { width: 44px; height: 12px; justify-self: end; }
.grip { width: 3px; height: 16px; background: repeating-linear-gradient(#b5b4b9 0 2px, transparent 2px 3px); }
.toolbar { background: #eeeef0; display: grid; align-items: center; justify-items: center; }
.toolbar.top { height: 24px; flex: none; margin-bottom: 3px; justify-content: start; grid-template-columns: 6px 18px 28px 5px 11px 16px 12px 16px 29px 2px 26px; }
.toolbar .grip { justify-self: start; }
.sep { width: 1px; height: 22px; background: #a7a6aa; }
.dd { width: 5px; height: 3px; background: #000; clip-path: polygon(0 0, 100% 0, 50% 100%); }
.dd.dim { background: #a7a6aa; }

.body { display: flex; height: 872px; flex: none; }
.side { width: 264px; display: flex; flex-direction: column; border-right: 1px solid #8d8c91; }
.side-head { height: 18px; flex: none; background: #335ea8; color: #fff; display: flex; justify-content: space-between; align-items: center; padding: 0 4px 0 1px; line-height: 17px; margin-bottom: 1px; }
.side-head svg { width: 9px; height: 9px; }
.side-btn { height: 19px; flex: none; text-align: center; line-height: 18px; border-top: 1px solid #fff; border-bottom: 1px solid #a7a6aa; }
.side-btn:nth-child(2) { line-height: 20px; }
.side-btn.open { height: 20px; border-bottom: 1px solid #000; line-height: 20px; }
.treebox { height: 757px; flex: none; border-top: 2px solid #8d8c91; background: #fff; display: grid; grid-template: 735px 17px / 245px 17px; }
.tree { overflow: hidden; padding-left: 19px; }
.node { display: flex; height: 16px; }
.node .lv { width: 19px; height: 16px; background: repeating-linear-gradient(#a0a0a4 0 1px, transparent 1px 2px) 8px 0/1px 16px no-repeat; }
.node .lv.blank { background: none; }
.node .lv.own { background: repeating-linear-gradient(#a0a0a4 0 1px, transparent 1px 2px) 8px 0/1px 16px no-repeat, repeating-linear-gradient(90deg, #a0a0a4 0 1px, transparent 1px 2px) 8px 8px/11px 1px no-repeat; }
.node .lv.end { background: repeating-linear-gradient(#a0a0a4 0 1px, transparent 1px 2px) 8px 0/1px 8px no-repeat, repeating-linear-gradient(90deg, #a0a0a4 0 1px, transparent 1px 2px) 8px 8px/11px 1px no-repeat; }
.pm { display: block; width: 9px; height: 9px; margin: 4px; border: 1px solid #919095; background: linear-gradient(#000,#000) 1px 3px/5px 1px no-repeat #fff; }
.pm.plus { background: linear-gradient(#000,#000) 1px 3px/5px 1px no-repeat, linear-gradient(#000,#000) 3px 1px/1px 5px no-repeat #fff; }
.node .label { padding: 0 2px; margin-left: 2px; line-height: 17px; height: 16px; letter-spacing: -0.12px; }
.node.bold .label { font-weight: bold; letter-spacing: 0.03px; }
.node.sel .label { margin: 0 0 0 3px; padding: 0 1px; background: #335ea8; color: #fff; outline: 1px dotted #c98a2a; outline-offset: -1px; }

.vscroll { width: 17px; display: flex; flex-direction: column; }
.vscroll b, .hscroll b { width: 17px; height: 17px; display: grid; place-items: center; }
.vscroll b, .hscroll b, .vscroll .thumb, .hscroll .thumb { background-color: #ebe9ed; border: 1px solid; border-color: #fff #a7a6aa #a7a6aa #fff; }
.vscroll b::after { content: ""; width: 7px; height: 4px; background: #000; clip-path: polygon(0 0, 100% 0, 50% 100%); }
.vscroll b.up::after { clip-path: polygon(50% 0, 100% 100%, 0 100%); }
.hscroll b::after { content: ""; width: 4px; height: 7px; background: #000; clip-path: polygon(0 0, 100% 50%, 0 100%); }
.hscroll b.left::after { clip-path: polygon(100% 0, 100% 100%, 0 50%); }
.track { flex: 1; background: repeating-conic-gradient(#fff 0 25%, #ebe9ed 0 50%) 0 0/2px 2px; }
.treebox .vscroll .thumb { height: 218px; }
.hscroll { display: flex; grid-column: 1; background: #ebe9ed; }
.hscroll .thumb { width: 133px; }
.treebox::after { content: ""; background: #ebe9ed; }

.splitter { width: 12px; display: flex; justify-content: center; }
.splitter i {
  width: 6px; height: 243px; margin-top: 318px; margin-left: -1px;
  background:
    linear-gradient(90deg, #a7a6aa 2px, transparent 0) 0 0/6px 100%;
  background:
    conic-gradient(from 0deg at 2px 2px, transparent 270deg, #a7a6aa 0) 0 0/8px 4px,
    conic-gradient(from 0deg at 2px 2px, transparent 270deg, #a7a6aa 0) 4px 2px/8px 4px;
}
.main { flex: 1; min-width: 0; margin-left: -7px; }
.mainbar { width: 862px; height: 25px; margin-top: -1px;
  grid-template-columns: 6px 213px 22px 10px 6px 57px 8px 26px 8px 25px 23px 22px 6px 12px 16px 30px 16px 16px 18px 14px 4px 20px 8px 28px 20px 26px 4px 22px 24px 6px 26px 22px 22px 8px 20px 26px 22px; }
.combo { width: 213px; height: 18px; background: #fff; display: flex; align-items: center; justify-content: space-between; padding: 0 4px 0 1px; }
.pressed { width: 23px; height: 22px; border: 1px solid #335ea8; background: #d6dae3; display: grid; place-items: center; }
.caption { height: 18px; margin: 2px 4px 2px 7px; padding-left: 2px; border: 1px solid #8d8c91; border-radius: 2px; line-height: 17px; }
.gridbox { display: flex; height: 805px; margin: 0 5px 0 7px; background: #fff; border-bottom: 1px solid #fff; }
.grid { flex: 1; min-width: 0; overflow: hidden; }
.groupband { height: 36px; background: #a7a6aa; padding: 9px 0 0 7px; }
.chip { width: 56px; height: 18px; background: #ebe9ed; border: 1px solid #f8f8fa; display: flex; align-items: center; justify-content: space-between; padding: 2px 1px 0 1px; }
.chip .fbtn { margin-top: -2px; }
.asc { width: 9px; height: 8px; background: linear-gradient(100deg, #a7a6aa 45%, #fff 50%); clip-path: polygon(50% 0, 100% 100%, 0 100%, 0 86%, 80% 86%, 50% 22%, 15% 90%, 0 90%); }
.fbtn { width: 16px; height: 14px; border: 1px solid; border-color: #fff #8d8c91 #8d8c91 #fff; background: #ebe9ed; display: grid; place-items: center; }
.fbtn::after { content: ""; width: 7px; height: 4px; background: #000; clip-path: polygon(0 0, 100% 0, 50% 100%); }
.table { width: 918px; }
.thead { display: grid; grid-template: 19px 19px / 12px 39px 22px 22px 460px 362px; background: #ebe9ed; border-left: 1px solid #a7a6aa; }
.thead > div { border-top: 1px solid #fff; border-right: 1px solid #a7a6aa; border-bottom: 1px solid #a7a6aa; }
.thead .ind { grid-row: span 2; }
.band { grid-column: 2 / 5; text-align: center; line-height: 19px; }
.band.wide { grid-column: 5 / 7; }
.th { display: flex; align-items: center; justify-content: center; gap: 3px; }
.th span { flex: 1; text-align: center; line-height: 18px; }
.th.c2, .th.c3 { padding-right: 1px; }
.th.c2 .asc { margin-right: 2px; }
.th.c3 span { padding-left: 1px; }
.grp, .row { display: flex; background: #ebe9ed; border-left: 1px solid #a7a6aa; }
.grp { height: 18px; }
.row { height: 19px; }
.ind { width: 12px; border-right: 1px solid #a7a6aa; border-bottom: 1px solid #a7a6aa; flex: none; }
.grp .ind, .row .ind { border-top: 1px solid #fff; }
.grp > span { flex: 1; border-bottom: 1px solid #a7a6aa; border-right: 1px solid #a7a6aa; display: flex; align-items: center; line-height: 18px; letter-spacing: -0.2px; }
.grp .pm { width: 11px; height: 11px; margin: 0 4px 0 3px; border-color: #fff #8d8c91 #8d8c91 #fff; background-color: #ebe9ed; background-position: 2px 4px, 4px 2px; }
.indent { width: 17px; border-right: 1px solid #a7a6aa; flex: none; }
.cell { border-right: 1px solid #a7a6aa; border-bottom: 1px solid #a7a6aa; background: #fff; padding: 1px 0 0 1px; overflow: hidden; text-overflow: ellipsis; flex: none; line-height: 17px; }
.row.y .cell { background: #ffffe1; }
.row.cur .cell { background: #ebe9ed; }
.row.cur .ind { display: grid; place-items: center; }
.ind svg { width: 6px; height: 9px; display: block; margin-left: -1px; }
.w-ic { width: 22px; padding: 1px 0 0 2px; }
.w-2 { width: 460px; }
.w-3 { width: 362px; padding-right: 4px; }
.gridbox .vscroll { border-top: 1px solid #ebe9ed; }
.gridbox .vscroll .thumb { height: 585px; }

.status { display: grid; height: 19px; margin: 4px 0 0 -2px; grid-template-columns: 151px 97px 152px 152px 375px 1fr; gap: 2px; }
.status > div, .appstatus > div { border: 1px solid #a7a6aa; display: flex; align-items: center; padding: 0 1px; }
.status .i { margin: 0 3px 0 -1px; }
.status > div:nth-child(4) .i { margin-right: 4px; }
.status > div:last-child { border-right: 0; }

.tabs { display: flex; height: 23px; flex: none; margin-top: 3px; }
.tabs > div { display: flex; align-items: center; gap: 2px; }
.tabs > div:nth-child(1) { width: 153px; border-right: 1px solid #a7a6aa; }
.tabs > div:nth-child(2) { width: 155px; border-right: 1px solid #a7a6aa; padding-left: 6px; }
.tabs > div.active { width: 139px; height: 22px; margin-left: 1px; border: 1px solid #335ea8; background: #dbdee6; padding: 0 0 0 2px; gap: 3px; }
.appstatus { display: grid; flex: none; height: 19px; margin-top: 1px; grid-template-columns: 905px 102px 32px 28px 31px 27px 1fr; gap: 2px; }
.appstatus > div { padding: 0 1px; justify-content: center; }
.appstatus > div:first-child { border-left: 0; justify-content: start; padding: 0; margin-left: -1px; }
.appstatus > div:last-child { border-right: 0; justify-content: start; gap: 3px; padding-left: 1px; border-bottom-color: #ebe9ed; letter-spacing: -0.2px; }
.window::after { content: ""; height: 2px; flex: none; background: linear-gradient(#27509c 50%, #7db8ea 50%); }
```
FILE: app.js
```js
// [level, icon, label, state]; state: "-" expanded, "+" collapsed
const tree = [
  [1,'tea','Технико-экономический анализ','-'],
  [2,'book','Загрузка складов'],[2,'tea','План-фактный анализ партий ДСЕ'],[2,'gold','Распределение загрузки по видам'],[2,'check','Анализ поставщиков'],
  [2,'gold','Укрупненное распределение','-'],
  [3,'folderlist','Распределение загрузки по месяцам'],[3,'gearlist','Распределение загрузки по местам'],[3,'greendoc','Распределение загрузки по маршруту'],
  [2,'order','Загрузка по нарядам','-'],
  [3,'graph','Графики загрузки ресурсов'],[3,'factory','Загрузка номенклатуры оборудования'],[3,'monitor','Загрузка мощностей (РЦ)'],[3,'people','Загрузка персонала'],
  [1,'coins','Себестоимость','+'],[1,'ledger','Главная книга','+'],[1,'books','Справочники','-'],
  [2,'bars','ШПЗ изделия'],[2,'store','Места хранения'],[2,'k','Коды видов заказа'],[2,'v','Виды производства'],[2,'ei','Дополнительные ЕИ'],
  [2,'p','Причины отклонения'],[2,'gold','Группы сложности продукции'],[2,'geargreen','Группы сложности производства'],[2,'works','Виды работ'],
  [2,'docs','Документы'],[2,'people','Категории работников'],[2,'worker','Профессии'],[2,'techkinds','Виды техопераций'],[2,'tech','Техоперации'],
  [2,'gears','Транзитное время'],[2,'b','Оборудование'],[2,'t','Оснастка'],[2,'tools','Оснастка/Инструмент'],[2,'yavki','Явки/неявки'],
  [2,'folderlist','Работы оборудования'],[2,'supplier','Категории поставщиков'],[2,'addinfo','Допинформация'],[2,'criteria','Критерии поставщиков'],
  [2,'bolt','Неспецифицированные изделия','+'],[2,'materials','Материалы','+'],[2,'plan','Планирование','+'],[2,'pie','Бухгалтерия','+'],
  [1,'service','Сервис','+']
];
const icon = id => `<svg class="i"><use href="#${id}"/></svg>`;
const pm = s => s ? `<i class="pm${s === '+' ? ' plus' : ''}"></i>` : '';
// a level continues when a sibling follows before its parent's next sibling
const continues = (i, lv) => {
  for (let j = i + 1; j < tree.length; j++) {
    if (tree[j][0] === lv) return true;
    if (tree[j][0] < lv) return false;
  }
  return false;
};
document.getElementById('tree').innerHTML = tree.map(([lv, ic, text, st], i) => {
  let cells = '';
  for (let l = 1; l < lv; l++) cells += `<i class="lv${continues(i, l) ? '' : ' blank'}"></i>`;
  cells += `<i class="lv ${continues(i, lv) ? 'own' : 'end'}">${pm(st)}</i>`;
  const cls = (st ? ' bold' : '') + (text === 'Оснастка' ? ' sel' : '');
  return `<div class="node${cls}">${cells}${icon(ic)}<span class="label">${text}</span></div>`;
}).join('');

const groups = [['+','Инструмент вспомогательный'],['+','Инструмент режущий'],['+','Инструментальная сборка'],['-','Оснастка']];
// [icon, designation, name]; the name repeats the designation when omitted
const rows = [
  ['pencil','12',''],['pencil','АИСТ 4200-3584-03','Плита поверочная'],['pencil','БМ 7200-3652-04','Плита шлифовальная'],
  ['pencil','ВД 4100-2410-06','Установ д/фрезеровки'],['pencil','ВД 6520-2038-02','Пресс-форма'],['pencil','ВИШМ 4100-2030-08','Установка токарная'],
  ['pencil','ВИШМ 4100-3843-04','Установка фрезерная'],['pencil','ВИШМ 4100-8305','Приспособление д/промывки'],['pencil','ВШ 7100-5864-08','Патрон сверлильный специальный'],
  ['edit','Втулка МР3/МР5 6100-0146 ГОСТ 13598-85'],['pencil','ГИРЛ 4100-8039-06','Установка фрезерная'],['pencil','ДМЩ 1700-0100','Штамп последовательный'],
  ['pencil','ДМЩ 1740-0682','Штамп совмещённый'],['pencil','ДМЩ 1740-1435-06','Штамп вырубной совмещенный'],['pencil','ИЖКС 4800-3804-06','Приспособление д/сушки'],
  ['pencil','ИЖКС 7100-2836-02','Патрон шлифовальный'],['edit','Индикатор ИЧ 02 кл.1 ГОСТ 577'],['edit','К50 Щ20 Перчатки_рез.ГОСТ 20010-74','Перчатки_рез.ГОСТ 20010-74'],
  ['pencil','КОМЗ 4100-4204-24','Установка шлифовальная'],['edit','Калибр 3‡0,5 КМЗ 8154-2122'],['edit','Калибр-пробка 32Н14 8133-0946 ГОСТ 14810-69'],
  ['edit','Калибр-скоба ф54,5-0,74 8118-0009-2 ГОСТ 2216'],['edit','Клеймо ОТК (химическое)'],['edit','Концевые меры 2-Н3-I ГОСТ 9038'],
  ['edit','Круг шлиф. I 450х63х203 25А 25Н СМ1 7к 1А 35м/с А I кл ГОСТ 2424-83'],['edit','Крючок КУ 9699-1163'],['edit','Кулачки КМЗ 7129-1425'],
  ['edit','Напильник 200 №3 2820-0018 ГОСТ1465-80'],['pencil','ОДК 7100-2382-04','Патрон токарный специальный'],['edit','Оправка 50х27 6222-0062 ГОСТ 13786-68'],
  ['pencil','ПИЖМ 4100-2410-06','Установка токарная'],['edit','Пластина реж. 03114-120408-2 ГОСТ 19052-80 Т15К6'],['edit','Ручка l=120 (покупка)'],
  ['edit','Сверло Р6М5 ф30 2301-0106 ГОСТ 10903-77'],['edit','Стойка С-IV-8-160х100 ГОСТ 10197']
];
const marker = '<svg viewBox="0 0 6 9"><path d="M1.5 1l3.500 3.500L1.500 8z" fill="#fff" stroke="#000"/></svg>';
document.getElementById('rows').innerHTML =
  groups.map(([s, t]) => `<div class="grp"><div class="ind"></div><span>${pm(s)}Тип : ${t}</span></div>`).join('') +
  rows.map(([ic, a, b = a], i) => {
    const cur = i === 12;
    return `<div class="row${cur ? ' cur' : i % 2 ? '' : ' y'}"><div class="ind">${cur ? marker : ''}</div><div class="indent"></div>` +
      `<div class="cell w-ic">${icon('ball')}</div><div class="cell w-ic">${icon('t')}</div><div class="cell w-ic">${icon(ic)}</div>` +
      `<div class="cell w-2">${a}</div><div class="cell w-3">${b}</div></div>`;
  }).join('');
```
